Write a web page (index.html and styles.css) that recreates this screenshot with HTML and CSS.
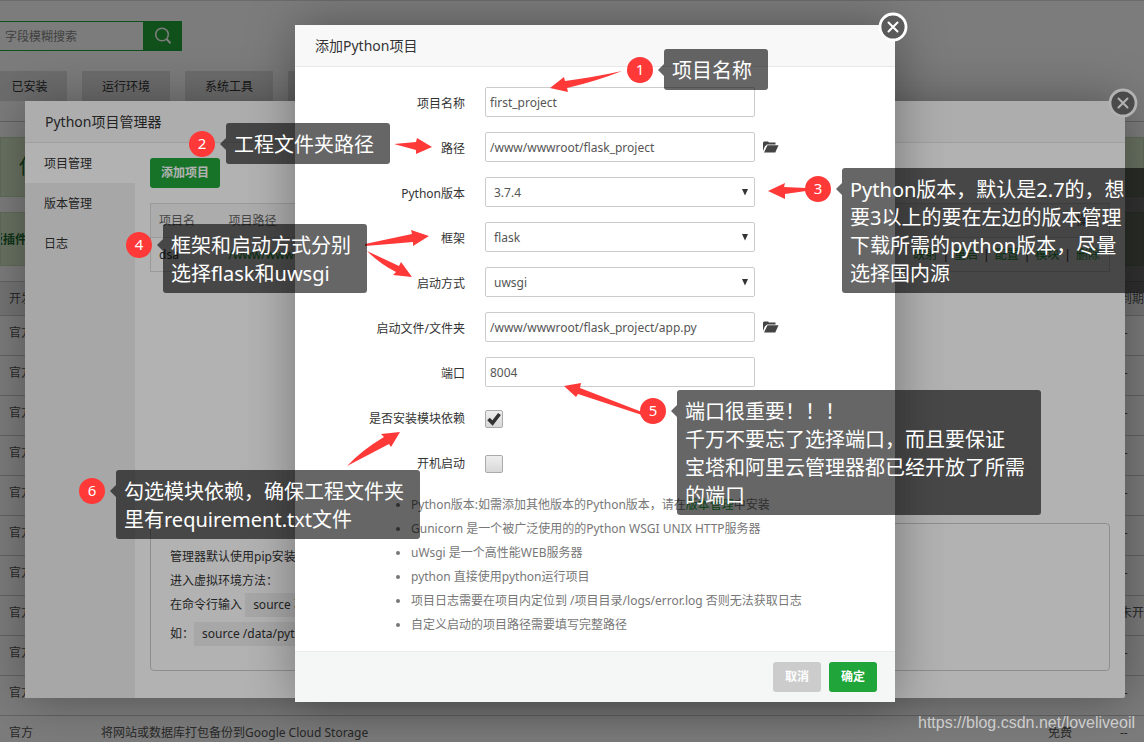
FILE: index.html
```html
<!DOCTYPE html>
<html lang="zh-CN">
<head>
<meta charset="utf-8">
<title>添加Python项目</title>
<link rel="stylesheet" href="styles.css">
</head>
<body>
<div class="stage">

<main class="page">
  <form class="search">
    <input class="search-input" type="text" placeholder="字段模糊搜索" aria-label="字段模糊搜索">
    <button class="search-button" type="button" aria-label="搜索">
      <svg width="18" height="18" viewBox="0 0 18 18" fill="none" stroke="#fff" stroke-width="1.6"><circle cx="8" cy="7.5" r="6.3"/><path d="M12.5 12l4 4.2" stroke-width="2"/></svg>
    </button>
  </form>
  <nav class="tabs">
    <a class="tab tab-first" href="#">已安装</a>
    <a class="tab" href="#">运行环境</a>
    <a class="tab" href="#">系统工具</a>
    <a class="tab" href="#"></a>
  </nav>
  <div class="notice notice-tall">使</div>
  <div class="notice notice-plugin">板插件</div>
  <table class="software">
    <thead><tr><th>开发商</th><th></th><th></th><th>到期时间</th></tr></thead>
    <tbody>
      <tr><td>官方</td><td></td><td></td><td>--</td></tr>
      <tr><td>官方</td><td></td><td></td><td>--</td></tr>
      <tr><td>官方</td><td></td><td></td><td>--</td></tr>
      <tr><td>官方</td><td></td><td></td><td>--</td></tr>
      <tr><td>官方</td><td></td><td></td><td>--</td></tr>
      <tr><td>官方</td><td></td><td></td><td>--</td></tr>
      <tr><td>官方</td><td></td><td></td><td>--</td></tr>
      <tr><td>官方</td><td></td><td></td><td>未开通</td></tr>
      <tr><td>官方</td><td></td><td></td><td>--</td></tr>
      <tr><td>官方</td><td></td><td></td><td>--</td></tr>
      <tr><td>官方</td><td>将网站或数据库打包备份到Google Cloud Storage</td><td>免费</td><td>--</td></tr>
    </tbody>
  </table>
</main>

<div class="mask"></div>

<section class="dialog manager">
  <h2 class="dialog-title">Python项目管理器</h2>
  <button class="close" type="button" aria-label="关闭">
    <svg width="30" height="30" viewBox="0 0 30 30"><circle cx="15" cy="15" r="13" fill="#6a6a6a" stroke="#fff" stroke-width="2.8"/><path d="M10.5 10.5l9 9M19.5 10.5l-9 9" stroke="#fff" stroke-width="2" stroke-linecap="round"/></svg>
  </button>
  <div class="manager-body">
    <nav class="side">
      <a class="side-item side-active" href="#">项目管理</a>
      <a class="side-item" href="#">版本管理</a>
      <a class="side-item" href="#">日志</a>
    </nav>
    <div class="manager-main">
      <button class="btn btn-add" type="button">添加项目</button>
      <table class="projects">
        <thead><tr><th>项目名</th><th>项目路径</th><th>操作</th></tr></thead>
        <tbody><tr><td>dsa</td><td><a href="#">/www/wwwroot</a></td><td class="ops"><a href="#">映射</a>|<a href="#">重启</a>|<a href="#">配置</a>|<a href="#">模块</a>|<a href="#">删除</a></td></tr></tbody>
      </table>
      <div class="help">
        <p>管理器默认使用pip安装</p>
        <p>进入虚拟环境方法：</p>
        <p>在命令行输入 <code>source 项目虚拟环境</code></p>
        <p class="help-example">如：<code>source /data/python/bin</code></p>
      </div>
    </div>
  </div>
</section>

<div class="mask"></div>

<section class="dialog adder">
  <h2 class="dialog-title">添加Python项目</h2>
  <button class="close" type="button" aria-label="关闭">
    <svg width="30" height="30" viewBox="0 0 30 30"><circle cx="15" cy="15" r="13" fill="#5a5a5a" stroke="#fff" stroke-width="2.8"/><path d="M10.5 10.5l9 9M19.5 10.5l-9 9" stroke="#fff" stroke-width="2" stroke-linecap="round"/></svg>
  </button>
  <form class="form">
    <div class="row"><label for="name">项目名称</label><input class="field" id="name" type="text" value="first_project"></div>
    <div class="row"><label for="path">路径</label><input class="field" id="path" type="text" value="/www/wwwroot/flask_project">
      <svg class="folder" width="16" height="12" viewBox="0 0 16 12" fill="#444"><path d="M0 10V1.5L1 .5h4l1 1h6.5v2H4L1.8 5.5z"/><path d="M4.5 4.3H15.5L12.3 11.5H1z"/></svg></div>
    <div class="row"><label for="version">Python版本</label><span class="select"><select class="field" id="version"><option>3.7.4</option></select><svg class="caret" width="8" height="7" viewBox="0 0 8 7"><path d="M1 0h6L4 6.500z" fill="#333"/></svg></span></div>
    <div class="row"><label for="framework">框架</label><span class="select"><select class="field" id="framework"><option>flask</option></select><svg class="caret" width="8" height="7" viewBox="0 0 8 7"><path d="M1 0h6L4 6.500z" fill="#333"/></svg></span></div>
    <div class="row"><label for="mode">启动方式</label><span class="select"><select class="field" id="mode"><option>uwsgi</option></select><svg class="caret" width="8" height="7" viewBox="0 0 8 7"><path d="M1 0h6L4 6.500z" fill="#333"/></svg></span></div>
    <div class="row"><label for="file">启动文件/文件夹</label><input class="field" id="file" type="text" value="/www/wwwroot/flask_project/app.py">
      <svg class="folder" width="16" height="12" viewBox="0 0 16 12" fill="#444"><path d="M0 10V1.5L1 .5h4l1 1h6.5v2H4L1.8 5.5z"/><path d="M4.5 4.3H15.5L12.3 11.5H1z"/></svg></div>
    <div class="row"><label for="port">端口</label><input class="field" id="port" type="text" value="8004"></div>
    <div class="row"><label for="deps">是否安装模块依赖</label><span class="check"><input id="deps" type="checkbox" checked><svg class="tick" width="18" height="18" viewBox="0 0 18 18" fill="none" stroke="#333" stroke-width="3.6"><path d="M3.5 9l4 4L14.500 4"/></svg></span></div>
    <div class="row"><label for="boot">开机启动</label><span class="check"><input id="boot" type="checkbox"></span></div>
    <ul class="tips">
      <li>Python版本:如需添加其他版本的Python版本，请在<a href="#">版本管理</a>中安装</li>
      <li>Gunicorn 是一个被广泛使用的的Python WSGI UNIX HTTP服务器</li>
      <li>uWsgi 是一个高性能WEB服务器</li>
      <li>python 直接使用python运行项目</li>
      <li>项目日志需要在项目内定位到 /项目目录/logs/error.log 否则无法获取日志</li>
      <li>自定义启动的项目路径需要填写完整路径</li>
    </ul>
    <div class="actions"><button class="btn btn-cancel" type="button">取消</button><button class="btn" type="button">确定</button></div>
  </form>
</section>

<svg class="arrows" width="1144" height="742" viewBox="0 0 1144 742" fill="#ff3838">
  <path d="M550 88L564 77L565 81Q595 77 622 71Q597 81 567 88L568 92Z"/>
  <path d="M394 144L416 142L417 138L432 147L416 154V150Z"/>
  <path d="M768 191L785 183L784 187L806 188V191L785 194V199Z"/>
  <path d="M365 244L412 234L411 230L429 236L413 246V242Q390 244 365 246Z"/>
  <path d="M367 251L399 266L401 262L412 277L393 275L396 272Q380 264 367 251Z"/>
  <path d="M564 386L581 383L580 388L642 412V415L578 394L576 397Z"/>
  <path d="M347 466Q362 450 384 437L381 434L400 432L391 447L389 444Z"/>
</svg>

<div class="callout c1"><span class="pin">1</span><p class="bubble">项目名称</p></div>
<div class="callout c2"><span class="pin">2</span><p class="bubble">工程文件夹路径</p></div>
<div class="callout c3"><span class="pin">3</span><p class="bubble">Python版本，默认是2.7的，想<br>要3以上的要在左边的版本管理<br>下载所需的python版本，尽量<br>选择国内源</p></div>
<div class="callout c4"><span class="pin">4</span><p class="bubble">框架和启动方式分别<br>选择flask和uwsgi</p></div>
<div class="callout c5"><span class="pin">5</span><p class="bubble">端口很重要！！！<br>千万不要忘了选择端口，而且要保证<br>宝塔和阿里云管理器都已经开放了所需<br>的端口</p></div>
<div class="callout c6"><span class="pin">6</span><p class="bubble">勾选模块依赖，确保工程文件夹<br>里有requirement.txt文件</p></div>

<div class="watermark">https://blog.csdn.net/loveliveoil</div>
</div>
</body>
</html>
```

FILE: styles.css
```css
* { box-sizing: border-box; }
body {
  margin: 0;
  font: 12px/24px "Noto Sans", "Noto Sans CJK SC", sans-serif;
  color: #333;
}
a { color: inherit; text-decoration: none; }
p, h2, ul { margin: 0; padding: 0; }
button, input, select { font: inherit; color: inherit; }
table { border-collapse: collapse; width: 100%; }
th, td { text-align: left; font-weight: 400; padding: 0; }

.stage { position: relative; height: 100vh; overflow: hidden; }

/* software list behind the dialogs */
.page { border-top: 1px solid #ddd; padding-top: 20px; background: #fff; color: #555; }
.search { display: flex; height: 30px; }
.search-input { width: 143px; border: 1px solid #20a53a; border-width: 1px 0; padding: 2px 5px 0; background: #fff; }
.search-input::placeholder { color: #888; }
.search-button { width: 39px; border: 0; padding: 0; background: #20a53a; display: grid; place-items: center; }
.tabs { display: flex; gap: 15px; margin-top: 20px; height: 51px; border-bottom: 1px solid #ccc; }
.tab { width: 88px; height: 30px; line-height: 32px; text-align: center; background: #e1e1e1; color: #333; }
.tab-first { width: 67px; padding-right: 8px; }
.notice { margin-top: 15px; height: 54px; line-height: 54px; border: 1px solid #c5dcb8; background: #d8ebcb; color: #1b6a30; font-weight: 700; overflow: hidden; }
.notice-tall { height: 60px; line-height: 58px; padding-left: 18px; font-size: 20px; font-weight: 400; }
.notice-plugin { font-size: 12px; text-indent: -10px; }
.software { margin-top: 15px; width: 1180px; table-layout: fixed; }
.software th, .software td { height: 40px; border-top: 1px solid #ccc; padding-bottom: 5px; }
.software th { height: 34px; padding-bottom: 0; background: #f0f0f0; }
.software th:first-child { width: 101px; }
.software th:nth-child(3) { width: 72px; }
.software th:nth-child(4) { width: 60px; }
.software th:nth-child(2) { width: 947px; }
.software th:first-child, .software td:first-child { padding-left: 9px; }

.mask { position: absolute; inset: 0; background: rgba(0, 0, 0, .3); }

/* dialogs */
.dialog { position: absolute; background: #fff; box-shadow: 1px 1px 50px rgba(0, 0, 0, .35); border-radius: 2px; }
.dialog-title { height: 42px; line-height: 42px; padding-left: 20px; background: #f8f8f8; border-bottom: 1px solid #e8e8e8; font-size: 14px; font-weight: 400; }
.close { position: absolute; top: -13px; right: -13px; width: 30px; height: 30px; border: 0; padding: 0; background: none; }
.close svg { display: block; }
.btn { height: 30px; border: 0; border-radius: 3px; padding: 0 12px; background: #20a53a; color: #fff; font-weight: 700; }

.manager { top: 101px; left: 25px; right: 19px; }
.manager .dialog-title { border-bottom-color: #e4e4e4; }
.manager-body { display: flex; min-height: 555px; }
.side { width: 110px; background: #f0f0f0; }
.side-item { display: block; height: 40px; line-height: 42px; padding-left: 19px; }
.side-active { background: #fff; }
.manager-main { flex: 1; display: flex; flex-direction: column; align-items: flex-start; padding: 15px 15px 27px; }
.btn-add { padding: 0 11px; }
.projects { margin-top: 15px; border: 1px solid #ddd; }
.projects th { height: 34px; background: #f6f6f6; color: #666; }
.projects td { height: 34px; border-top: 1px solid #ddd; }
.projects th, .projects td { padding: 0 9px 0 8px; }
.projects th:first-child { width: 70px; }
.projects th:last-child, .projects td:last-child { text-align: right; }
.projects a { color: #20a53a; }
.ops a { margin-left: 5px; }
.ops a:not(:last-child) { margin-right: 5px; }
.help { width: 100%; margin-top: auto; min-height: 148px; border: 1px solid #ccc; border-radius: 4px; padding: 21px 19px 20px; }
.help p { white-space: nowrap; }
.help code { display: inline-block; height: 24px; padding: 0 8px; background: #f0f0f0; font: inherit; }
.help-example { padding-top: 5px; }

.adder { top: 25px; left: calc(50% - 277px); width: 600px; }
.form { padding-top: 20px; }
.row { display: flex; align-items: center; height: 30px; margin-bottom: 15px; }
.row label { width: 170px; margin-right: 20px; padding-top: 3px; text-align: right; }
.field { width: 270px; height: 30px; border: 1px solid #ccc; border-radius: 2px; padding: 0 4px; background: #fff; color: #555; }
.folder { margin-left: 8px; }
.select { position: relative; }
.select .field { display: block; appearance: none; padding: 2px 8px 0; }
.caret { position: absolute; right: 6px; top: 12px; }
.check { position: relative; height: 18px; margin-top: 4px; }
.check input { display: block; appearance: none; width: 18px; height: 18px; margin: 0; border: 1px solid #aaa; border-radius: 2px; background: linear-gradient(#eee, #d8d8d8); }
.tick { position: absolute; inset: 0; pointer-events: none; }
.tips { margin-top: 16px; padding-left: 116px; color: #777; }
.tips a { color: #20a53a; }
.actions { display: flex; justify-content: flex-end; gap: 8px; margin-top: 14px; padding: 10px 18px; border-top: 1px solid #eaedec; background: #f5f7f7; }
.btn-cancel { background: #ccc; }

/* annotations */
.arrows { position: absolute; top: 0; left: 0; }
.callout { position: absolute; display: flex; align-items: flex-start; gap: 11px; white-space: nowrap; color: #fff; }
.pin { width: 26px; height: 26px; margin-top: 8px; border-radius: 50%; background: #ff3838; font-size: 15px; line-height: 24px; text-align: center; }
.bubble { position: relative; padding: 8px 16px 5px 8px; border-radius: 3px; background: rgba(0, 0, 0, .6); font-size: 20px; line-height: 28px; }
.bubble::before { content: ""; position: absolute; right: 100%; top: 15px; border: 6px solid transparent; border-right-color: rgba(0, 0, 0, .6); border-left: 0; }
.c1 { left: 627px; top: 49px; }
.c2 { left: 189px; top: 123px; }
.c3 { left: 805px; top: 168px; }
.c3 .bubble { padding-right: 24px; }
.c4 { left: 126px; top: 224px; }
.c5 { left: 640px; top: 390px; }
.c6 { left: 79px; top: 470px; }
.watermark { position: absolute; right: 9px; bottom: 7px; font: 16px/24px "Liberation Sans", sans-serif; color: rgba(255, 255, 255, .65); }
```
